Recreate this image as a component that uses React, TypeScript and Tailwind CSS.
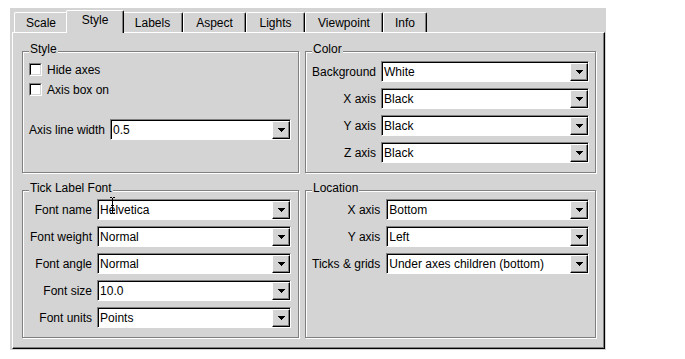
import React from "react";

function Arrow() {
  return (
    <svg width="7" height="4" viewBox="0 0 7 4" shapeRendering="crispEdges">
      <rect x="0" y="0" width="7" height="1" fill="black" />
      <rect x="1" y="1" width="5" height="1" fill="black" />
      <rect x="2" y="2" width="3" height="1" fill="black" />
      <rect x="3" y="3" width="1" height="1" fill="black" />
    </svg>
  );
}

function Combo({ value, children }: { value: string; children?: React.ReactNode }) {
  return (
    <div className="relative flex h-[21px] border border-t-[#808080] border-l-[#808080] border-b-white border-r-white">
      <div className="flex min-w-0 flex-1 items-center border-t border-l border-black bg-white">
        <span className="flex-1 overflow-hidden whitespace-nowrap pl-[1px]">{value}</span>
        <div className="flex h-[18px] w-[18px] items-center justify-center border border-t-white border-l-white border-b-black border-r-black bg-[#d4d4d4] shadow-[inset_-1px_-1px_0_#808080]">
          <Arrow />
        </div>
      </div>
      {children}
    </div>
  );
}

function Group({ title, className, children }: { title: string; className: string; children: React.ReactNode }) {
  return (
    <div className={"relative border border-[#808080] shadow-[inset_1px_1px_0_#ffffff,1px_1px_0_#ffffff] " + className}>
      <span className="absolute left-[6px] top-[-10px] bg-[#d4d4d4] px-[1px] leading-[14px]">{title}</span>
      {children}
    </div>
  );
}

function CheckBox({ label }: { label: string }) {
  return (
    <div className="flex h-[13px] items-center gap-[5px]">
      <div className="h-[13px] w-[13px] border border-t-[#808080] border-l-[#808080] border-b-white border-r-white">
        <div className="h-full w-full border border-t-black border-l-black border-b-[#d4d4d4] border-r-[#d4d4d4] bg-white" />
      </div>
      <span className="leading-[14px]">{label}</span>
    </div>
  );
}

function Label({ text }: { text: string }) {
  return <span className="self-center whitespace-nowrap text-right leading-[14px]">{text}</span>;
}

export default function App() {
  const tab = "flex h-[20px] justify-center rounded-t-[2px] border-t border-l border-r border-t-white border-l-white border-r-black pt-[3px] shadow-[inset_-1px_0_0_#808080] leading-[14px]";
  return (
    <div className="h-[359px] w-[685px] overflow-hidden bg-white pl-[10px] pt-[8px] font-['Liberation_Sans',Arial,sans-serif] text-[12px] text-black">
      <div className="flex h-[342px] w-[596px] flex-col bg-[#d4d4d4] pb-[1px] pl-[2px] pr-[1px]">
        <div className="flex h-[24px] items-end pl-[2px]">
          <div className={tab + " w-[54px]"}>Scale</div>
          <div className="relative z-10 mx-[-2px] mb-[-1px] flex h-[23px] w-[58px] justify-center rounded-t-[2px] border-t border-l border-r border-t-white border-l-white border-r-black bg-[#d4d4d4] pt-[2px] leading-[14px] shadow-[inset_-1px_0_0_#808080]">
            Style
          </div>
          <div className={tab + " w-[61px]"}>Labels</div>
          <div className={tab + " w-[63px]"}>Aspect</div>
          <div className={tab + " w-[59px]"}>Lights</div>
          <div className={tab + " w-[78px]"}>Viewpoint</div>
          <div className={tab + " w-[44px]"}>Info</div>
        </div>
        <div className="flex-1 border-t border-l border-r border-b border-t-white border-l-white border-r-black border-b-black pl-[9px] pt-[18px] shadow-[inset_-1px_-1px_0_#808080]">
          <div className="grid grid-cols-[277px_291px] grid-rows-[122px_148px] gap-x-[6px] gap-y-[17px]">
            <Group title="Style" className="flex flex-col pl-[6px] pr-[7px] pt-[11px]">
              <div className="flex flex-col gap-[7px]">
                <CheckBox label="Hide axes" />
                <CheckBox label="Axis box on" />
              </div>
              <div className="mt-[23px] flex items-center gap-[5px]">
                <span className="whitespace-nowrap leading-[14px]">Axis line width</span>
                <div className="flex-1">
                  <Combo value="0.5" />
                </div>
              </div>
            </Group>
            <Group title="Color" className="grid grid-cols-[auto_1fr] content-start gap-x-[5px] gap-y-[6px] pl-[6px] pr-[6px] pt-[9px]">
              <Label text="Background" />
              <Combo value="White" />
              <Label text="X axis" />
              <Combo value="Black" />
              <Label text="Y axis" />
              <Combo value="Black" />
              <Label text="Z axis" />
              <Combo value="Black" />
            </Group>
            <Group title="Tick Label Font" className="grid grid-cols-[auto_1fr] content-start gap-x-[5px] gap-y-[6px] pl-[7px] pr-[7px] pt-[8px]">
              <Label text="Font name" />
              <Combo value="Helvetica">
                <svg className="absolute left-[11px] top-[-3px]" width="7" height="17" viewBox="0 0 7 17">
                  <path d="M1 0.5H3M4 0.5H6M3.5 1V16M1 16.5H3M4 16.5H6M2 8.5H5" stroke="black" strokeWidth="1" fill="none" />
                </svg>
              </Combo>
              <Label text="Font weight" />
              <Combo value="Normal" />
              <Label text="Font angle" />
              <Combo value="Normal" />
              <Label text="Font size" />
              <Combo value="10.0" />
              <Label text="Font units" />
              <Combo value="Points" />
            </Group>
            <Group title="Location" className="grid grid-cols-[auto_1fr] content-start gap-x-[6px] gap-y-[6px] pl-[6px] pr-[6px] pt-[8px]">
              <Label text="X axis" />
              <Combo value="Bottom" />
              <Label text="Y axis" />
              <Combo value="Left" />
              <Label text="Ticks & grids" />
              <Combo value="Under axes children (bottom)" />
            </Group>
          </div>
        </div>
      </div>
    </div>
  );
}
